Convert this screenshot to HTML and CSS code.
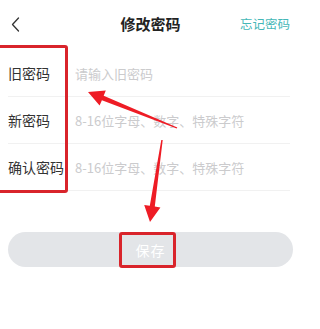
FILE: index.html
```html
<!DOCTYPE html>
<html lang="zh-CN">
<head>
<meta charset="utf-8">
<title>修改密码</title>
<link rel="stylesheet" href="styles.css">
</head>
<body>
<div class="page">
  <header class="topbar">
    <div class="back">
      <svg width="9" height="15" viewBox="0 0 9 15"><path d="M7.5 1 L1.5 7.5 L7.5 14" fill="none" stroke="#333" stroke-width="1.3" stroke-linecap="round" stroke-linejoin="round"/></svg>
    </div>
    <h1 class="title">修改密码</h1>
    <a class="forgot">忘记密码</a>
  </header>
  <form class="form">
    <label class="row"><span class="label">旧密码</span><input class="field" type="password" placeholder="请输入旧密码"></label>
    <label class="row"><span class="label">新密码</span><input class="field" type="password" placeholder="8-16位字母、数字、特殊字符"></label>
    <label class="row"><span class="label">确认密码</span><input class="field" type="password" placeholder="8-16位字母、数字、特殊字符"></label>
    <button class="save" type="button">保存</button>
  </form>

  <div class="mark mark-labels"></div>
  <div class="mark mark-save"></div>
  <svg class="arrows" width="301" height="329" viewBox="0 0 301 329">
    <polygon fill="#ee1c25" points="88,92 105.8,90.4 103.7,95.7 177.3,127.4 176.7,128.6 101.9,100.3 99.6,105.6"/>
    <polygon fill="#ee1c25" points="150,222 160.4,207.4 154.8,206.6 162.7,140.1 161.3,139.9 149.8,205.8 144.2,205"/>
  </svg>
</div>
</body>
</html>
```

FILE: styles.css
```css
* { box-sizing: border-box; }
html, body { margin: 0; padding: 0; background: #fff; }
body {
  font-family: "Noto Sans CJK SC", "Noto Sans", sans-serif;
  color: #333;
}
.page {
  position: relative;
  width: 301px;
  height: 329px;
  overflow: hidden;
}
.topbar {
  height: 50px;
  display: grid;
  grid-template-columns: 1fr auto 1fr;
  align-items: center;
  padding: 0 11px 2px 11px;
}
.back { display: flex; align-items: center; padding-top: 0; }
.title {
  margin: 0;
  font-size: 15px;
  font-weight: 700;
  color: #222;
  line-height: 20px;
}
.forgot {
  justify-self: end;
  font-size: 12.5px;
  color: #45b7b7;
  line-height: 20px;
}
.form {
  margin: 0 11px 0 8px;
  display: flex;
  flex-direction: column;
}
.row {
  height: 47px;
  display: flex;
  align-items: center;
  border-bottom: 1px solid #f1f1f1;
}
.label {
  width: 67px;
  flex: none;
  font-size: 14px;
  color: #333;
}
.field {
  flex: 1;
  min-width: 0;
  border: none;
  outline: none;
  padding: 0;
  font-family: inherit;
  font-size: 13px;
  background: transparent;
  color: #333;
}
.field::placeholder { color: #cbcbcd; }
.save {
  margin: 41px -3px 0 0;
  height: 35px;
  border: none;
  border-radius: 18px;
  background: #e3e5e8;
  color: #fff;
  font-family: inherit;
  font-size: 14px;
  letter-spacing: 1px;
}
.mark {
  position: absolute;
  border: 3px solid #d9242b;
  border-radius: 3px;
}
.mark-labels { left: -4px; top: 45px; width: 72px; height: 148px; }
.mark-save { left: 119px; top: 232px; width: 57px; height: 36px; }
.arrows { position: absolute; left: 0; top: 0; pointer-events: none; }
```
